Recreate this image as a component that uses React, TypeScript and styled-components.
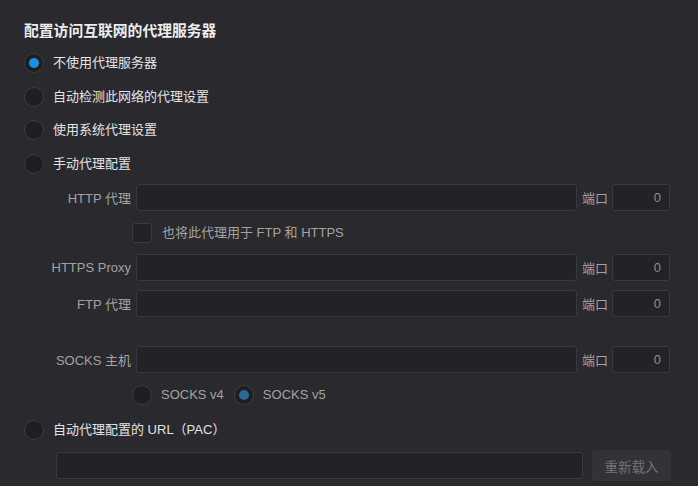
import React from "react";
import styled, { createGlobalStyle } from "styled-components";

const Global = createGlobalStyle`
  html, body {
    margin: 0;
    padding: 0;
    background: #2a292e;
  }
  body {
    font-family: "Liberation Sans", "Noto Sans CJK SC", sans-serif;
    -webkit-font-smoothing: antialiased;
  }
  * { box-sizing: border-box; }
`;

const Page = styled.div`
  width: 698px;
  height: 486px;
  overflow: hidden;
  background: #2a292e;
  padding: 21px 0 0 24px;
  display: flex;
  flex-direction: column;
`;

const Title = styled.div`
  font-size: 14.8px;
  line-height: 20px;
  font-weight: 700;
  color: #ededee;
`;

const RadioList = styled.div`
  margin-top: 12px;
  display: flex;
  flex-direction: column;
  gap: 13.5px;
`;

const RadioRow = styled.label<{ $top?: number; $indent?: number }>`
  display: flex;
  align-items: center;
  height: 20px;
  gap: 9px;
  margin-top: ${(p) => p.$top ?? 0}px;
  margin-left: ${(p) => p.$indent ?? 0}px;
`;

const RadioCircle = styled.span<{ $checked?: boolean; $muted?: boolean }>`
  width: 20px;
  height: 20px;
  flex: 0 0 20px;
  border-radius: 50%;
  background: #1f1e23;
  border: 1px solid #3c3b40;
  display: flex;
  align-items: center;
  justify-content: center;
  &::after {
    content: "";
    display: ${(p) => (p.$checked ? "block" : "none")};
    width: 10px;
    height: 10px;
    border-radius: 50%;
    background: ${(p) => (p.$muted ? "#2a6a95" : "#1b8fe2")};
  }
`;

const RadioText = styled.span<{ $dim?: boolean }>`
  font-size: 13px;
  line-height: 20px;
  color: ${(p) => (p.$dim ? "#a3a3a5" : "#e4e4e5")};
  white-space: nowrap;
`;

const FieldRow = styled.div<{ $top?: number }>`
  display: grid;
  grid-template-columns: 107px 441px 25px 58px;
  column-gap: 5px;
  align-items: center;
  height: 27px;
  margin-top: ${(p) => p.$top ?? 0}px;
`;

const FieldLabel = styled.span`
  font-size: 13px;
  color: #a3a3a5;
  text-align: right;
  white-space: nowrap;
`;

const TextBox = styled.div<{ $align?: string }>`
  height: 27px;
  background: #232227;
  border: 1px solid #3a393e;
  border-radius: 3px;
  font-size: 13px;
  line-height: 25px;
  color: #8e8e90;
  text-align: ${(p) => p.$align ?? "left"};
  padding: 0 8px;
`;

const OptionRow = styled.div<{ $top?: number }>`
  display: flex;
  align-items: center;
  height: 20px;
  margin-left: 108px;
  margin-top: ${(p) => p.$top ?? 0}px;
  gap: 10px;
`;

const CheckBox = styled.span`
  width: 20px;
  height: 20px;
  flex: 0 0 20px;
  background: #232227;
  border: 1px solid #3b3a3f;
  border-radius: 3px;
`;

const CheckLabel = styled.label`
  display: flex;
  align-items: center;
  gap: 10px;
`;

const PacRow = styled.div`
  display: flex;
  align-items: center;
  height: 31px;
  margin-top: 10px;
  margin-left: 32px;
  gap: 9px;
`;

const PacInput = styled(TextBox)`
  width: 527px;
`;

const ReloadButton = styled.button`
  width: 79px;
  height: 31px;
  border: none;
  border-radius: 4px;
  background: #333237;
  color: #737275;
  font-family: inherit;
  font-size: 13.5px;
  padding: 0;
`;

const mainOptions = [
  { label: "不使用代理服务器", checked: true },
  { label: "自动检测此网络的代理设置" },
  { label: "使用系统代理设置" },
  { label: "手动代理配置" },
];

const Field: React.FC<{ label: string; top?: number }> = ({ label, top }) => (
  <FieldRow $top={top}>
    <FieldLabel>{label}</FieldLabel>
    <TextBox />
    <FieldLabel>端口</FieldLabel>
    <TextBox $align="right">0</TextBox>
  </FieldRow>
);

export default function App() {
  return (
    <>
      <Global />
      <Page>
        <Title>配置访问互联网的代理服务器</Title>
        <RadioList>
          {mainOptions.map((o) => (
            <RadioRow key={o.label}>
              <RadioCircle $checked={o.checked} />
              <RadioText>{o.label}</RadioText>
            </RadioRow>
          ))}
        </RadioList>

        <Field label="HTTP 代理" top={10.5} />
        <OptionRow $top={12}>
          <CheckLabel>
            <CheckBox />
            <RadioText $dim>也将此代理用于 FTP 和 HTTPS</RadioText>
          </CheckLabel>
        </OptionRow>
        <Field label="HTTPS Proxy" top={11} />
        <Field label="FTP 代理" top={9} />
        <Field label="SOCKS 主机" top={29} />
        <OptionRow $top={12}>
          <RadioRow>
            <RadioCircle />
            <RadioText $dim>SOCKS v4</RadioText>
          </RadioRow>
          <RadioRow>
            <RadioCircle $checked $muted />
            <RadioText $dim>SOCKS v5</RadioText>
          </RadioRow>
        </OptionRow>

        <RadioRow $top={15}>
          <RadioCircle />
          <RadioText>自动代理配置的 URL（PAC）</RadioText>
        </RadioRow>
        <PacRow>
          <PacInput />
          <ReloadButton>重新载入</ReloadButton>
        </PacRow>
      </Page>
    </>
  );
}
